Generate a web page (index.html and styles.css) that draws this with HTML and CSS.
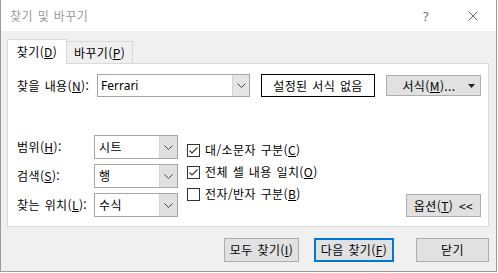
FILE: index.html
```html
<!DOCTYPE html>
<html lang="ko">
<head>
  <meta charset="UTF-8">
  <meta name="viewport" content="width=device-width, initial-scale=1.0">
  <title>찾기 및 바꾸기</title>
  <link rel="stylesheet" href="styles.css">
</head>
<body>
  <div class="window">
    <div class="titlebar">
      <span class="title">찾기 및 바꾸기</span>
      <span class="caption-btn help">?</span>
      <span class="caption-btn close">
        <svg width="10" height="10" viewBox="0 0 10 10"><path d="M0.5 0.5 L9.5 9.5 M9.5 0.5 L0.5 9.5" stroke="#666" stroke-width="1" fill="none"/></svg>
      </span>
    </div>

    <div class="content">
      <div class="tabs">
        <div class="tab active">찾기(<u>D</u>)</div>
        <div class="tab">바꾸기(<u>P</u>)</div>
      </div>

      <div class="panel">
        <div class="find-row">
          <label class="find-label">찾을 내용(<u>N</u>):</label>
          <div class="combo combo-find">
            <span class="combo-value">Ferrari</span>
            <span class="combo-arrow"><svg width="9" height="5" viewBox="0 0 9 5"><path d="M0.5 0.5 L4.5 4.5 L8.5 0.5" stroke="#444" fill="none"/></svg></span>
          </div>
          <div class="format-preview">설정된 서식 없음</div>
          <div class="btn btn-format">
            <span>서식(<u>M</u>)...</span>
            <svg class="caret" width="7" height="4" viewBox="0 0 7 4"><path d="M0 0 L7 0 L3.5 4 Z" fill="#222"/></svg>
          </div>
        </div>

        <div class="options">
          <div class="option-fields">
            <div class="field">
              <label class="field-label">범위(<u>H</u>):</label>
              <div class="combo combo-small">
                <span class="combo-value">시트</span>
                <span class="combo-arrow"><svg width="9" height="5" viewBox="0 0 9 5"><path d="M0.5 0.5 L4.5 4.5 L8.5 0.5" stroke="#444" fill="none"/></svg></span>
              </div>
            </div>
            <div class="field">
              <label class="field-label">검색(<u>S</u>):</label>
              <div class="combo combo-small">
                <span class="combo-value">행</span>
                <span class="combo-arrow"><svg width="9" height="5" viewBox="0 0 9 5"><path d="M0.5 0.5 L4.5 4.5 L8.5 0.5" stroke="#444" fill="none"/></svg></span>
              </div>
            </div>
            <div class="field">
              <label class="field-label">찾는 위치(<u>L</u>):</label>
              <div class="combo combo-small">
                <span class="combo-value">수식</span>
                <span class="combo-arrow"><svg width="9" height="5" viewBox="0 0 9 5"><path d="M0.5 0.5 L4.5 4.5 L8.5 0.5" stroke="#444" fill="none"/></svg></span>
              </div>
            </div>
          </div>

          <div class="checks">
            <div class="check">
              <span class="box"><svg width="11" height="11" viewBox="0 0 11 11"><path d="M1.5 5.5 L4 8 L9.5 2.5" stroke="#333" stroke-width="1.1" fill="none"/></svg></span>
              <span>대/소문자 구분(<u>C</u>)</span>
            </div>
            <div class="check">
              <span class="box"><svg width="11" height="11" viewBox="0 0 11 11"><path d="M1.5 5.5 L4 8 L9.5 2.5" stroke="#333" stroke-width="1.1" fill="none"/></svg></span>
              <span>전체 셀 내용 일치(<u>O</u>)</span>
            </div>
            <div class="check">
              <span class="box"></span>
              <span>전자/반자 구분(<u>B</u>)</span>
            </div>
          </div>

          <div class="btn btn-options">옵션(<u>T</u>) &lt;&lt;</div>
        </div>
      </div>

      <div class="actions">
        <div class="btn btn-find-all">모두 찾기(<u>I</u>)</div>
        <div class="btn btn-default">다음 찾기(<u>F</u>)</div>
        <div class="btn btn-close">닫기</div>
      </div>
    </div>
  </div>
</body>
</html>
```

FILE: styles.css
```css
body {
  margin: 0;
  background: #fff;
  font-family: "Noto Sans CJK KR", "Noto Sans", sans-serif;
  font-size: 12px;
  letter-spacing: 0.4px;
  word-spacing: 1px;
  color: #000;
}

u {
  text-underline-offset: 1px;
}

.window {
  width: 497px;
  height: 272px;
  box-sizing: border-box;
  border: 1px solid #9a9a9a;
  border-top: 0;
  background: #f0f0f0;
  display: flex;
  flex-direction: column;
}

/* 제목 표시줄 */
.titlebar {
  height: 31px;
  background: #fff;
  display: flex;
  align-items: center;
  padding-left: 9px;
  flex-shrink: 0;
}

.title {
  color: #999;
  flex: 1;
  line-height: 16px;
}

.caption-btn {
  width: 46px;
  height: 31px;
  display: flex;
  align-items: center;
  justify-content: center;
  color: #777;
}

.help {
  font-family: "Noto Sans", sans-serif;
  font-size: 13px;
  margin-right: 1px;
}

.content {
  padding: 8px 7px 0 6px;
  display: flex;
  flex-direction: column;
}

/* 탭 */
.tabs {
  display: flex;
  align-items: flex-end;
  height: 24px;
}

.tab {
  box-sizing: border-box;
  height: 22px;
  width: 66px;
  border: 1px solid #d9d9d9;
  border-left: 0;
  border-bottom: 0;
  display: flex;
  align-items: center;
  justify-content: center;
  line-height: 16px;
}

.tab.active {
  width: 60px;
  height: 25px;
  border-left: 1px solid #d9d9d9;
  background: #fff;
  margin-bottom: -1px;
  position: relative;
  z-index: 1;
  padding-bottom: 1px;
}

/* 패널 */
.panel {
  box-sizing: border-box;
  width: 482px;
  height: 164px;
  background: #fff;
  border: 1px solid #d9d9d9;
  padding: 10px 7px 0 9px;
}

.find-row {
  display: flex;
  align-items: center;
  height: 23px;
}

.find-label {
  width: 80px;
  line-height: 16px;
}

.combo {
  box-sizing: border-box;
  border: 1px solid #a6a6a6;
  background: #fff;
  display: flex;
  align-items: stretch;
}

.combo-value {
  flex: 1;
  display: flex;
  align-items: center;
  padding-left: 4px;
  line-height: 16px;
}

.combo-arrow {
  width: 16px;
  background: #e5e5e5;
  border-left: 1px solid #d4d4d4;
  display: flex;
  align-items: center;
  justify-content: center;
}

.combo-find {
  width: 153px;
  height: 23px;
}

.combo-find .combo-value {
  font-family: "Noto Sans", sans-serif;
  letter-spacing: 0;
  padding-left: 3px;
}

.format-preview {
  box-sizing: border-box;
  width: 114px;
  height: 23px;
  margin-left: 11px;
  border: 1px solid #000;
  display: flex;
  align-items: center;
  justify-content: center;
  line-height: 16px;
}

.btn {
  box-sizing: border-box;
  background: #e1e1e1;
  border: 1px solid #adadad;
  display: flex;
  align-items: center;
  justify-content: center;
  line-height: 16px;
}

.btn-format {
  width: 95px;
  height: 21px;
  margin-left: 11px;
  padding-left: 10px;
  gap: 12px;
}

.caret {
  margin-top: 1px;
}

/* 옵션 */
.options {
  display: flex;
  margin-top: 38px;
  height: 83px;
}

.option-fields {
  display: flex;
  flex-direction: column;
  gap: 5px;
}

.field {
  display: flex;
  align-items: center;
  height: 24px;
}

.field-label {
  width: 77px;
  line-height: 16px;
}

.combo-small {
  width: 84px;
  height: 24px;
}

.combo-small .combo-arrow {
  width: 17px;
  background: #e0e0e0;
}

.checks {
  margin-left: 9px;
  padding-top: 4px;
}

.check {
  display: flex;
  align-items: center;
  height: 22px;
  gap: 5px;
  line-height: 16px;
}

.box {
  box-sizing: border-box;
  width: 13px;
  height: 13px;
  border: 1px solid #333;
  display: flex;
  align-items: center;
  justify-content: center;
}

.btn-options {
  width: 75px;
  height: 23px;
  margin-left: auto;
  align-self: flex-end;
  margin-bottom: 1px;
  word-spacing: 2px;
}

/* 아래 버튼 */
.actions {
  display: flex;
  justify-content: flex-end;
  margin-top: 11px;
}

.actions .btn {
  height: 24px;
}

.btn-find-all {
  width: 75px;
  margin-right: 15px;
}

.btn-default {
  width: 80px;
  border: 2px solid #0078d7;
  margin-right: 22px;
}

.btn-close {
  width: 73px;
}
```
